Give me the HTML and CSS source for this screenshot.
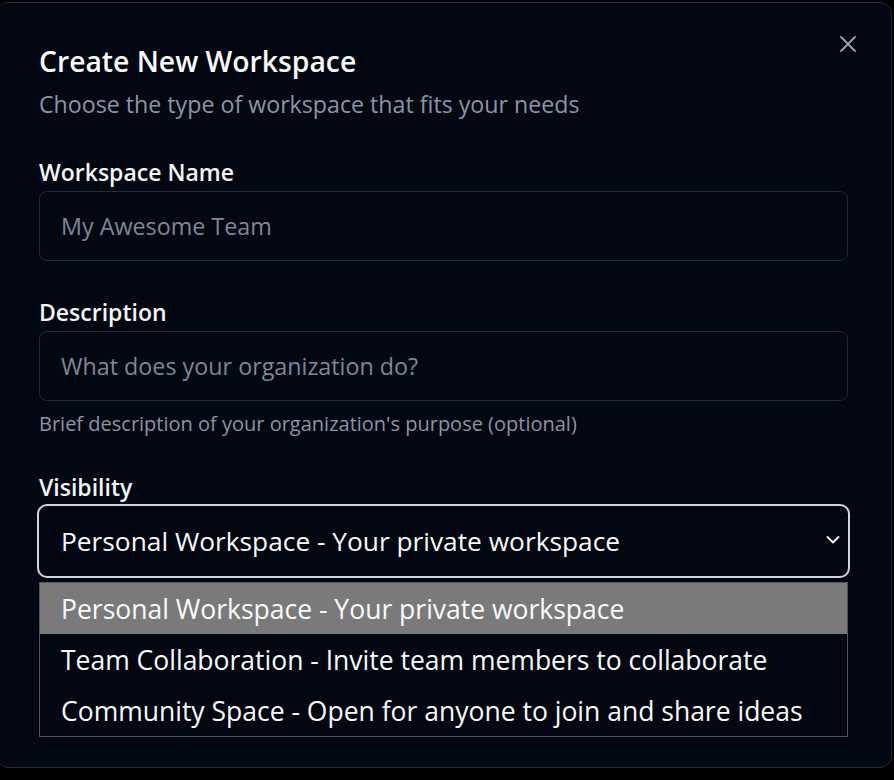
FILE: index.html
```html
<!DOCTYPE html>
<html lang="en">
<head>
<meta charset="utf-8">
<title>Create New Workspace</title>
<link rel="stylesheet" href="styles.css">
</head>
<body>
<div class="dialog">
  <button class="close" aria-label="Close">
    <svg width="16" height="16" viewBox="0 0 16 16"><path d="M1 1 L15 15 M15 1 L1 15" stroke="#9ca3af" stroke-width="1.8" stroke-linecap="round"/></svg>
  </button>
  <header class="head">
    <h2 class="title">Create New Workspace</h2>
    <p class="subtitle">Choose the type of workspace that fits your needs</p>
  </header>
  <div class="field">
    <label class="label">Workspace Name</label>
    <div class="input"><span class="placeholder">My Awesome Team</span></div>
  </div>
  <div class="field with-help">
    <label class="label">Description</label>
    <div class="input"><span class="placeholder">What does your organization do?</span></div>
    <p class="help">Brief description of your organization's purpose (optional)</p>
  </div>
  <div class="field vis">
    <label class="label">Visibility</label>
    <div class="select-wrap">
      <div class="select">
        <span class="value">Personal Workspace - Your private workspace</span>
        <svg class="chev" width="14" height="10" viewBox="0 0 14 10"><path d="M1.5 2 L7 7.5 L12.5 2" fill="none" stroke="#f3f4f6" stroke-width="1.8" stroke-linecap="round" stroke-linejoin="round"/></svg>
      </div>
      <ul class="options">
        <li class="opt active">Personal Workspace - Your private workspace</li>
        <li class="opt">Team Collaboration - Invite team members to collaborate</li>
        <li class="opt">Community Space - Open for anyone to join and share ideas</li>
      </ul>
    </div>
  </div>
</div>
</body>
</html>
```
FILE: styles.css
```css
* { box-sizing: border-box; }
html, body { margin: 0; padding: 0; }
body {
  background: #000;
  font-family: "Open Sans", "Noto Sans", sans-serif;
  overflow: hidden;
  width: 894px;
  height: 780px;
}
.dialog {
  position: relative;
  width: 896px;
  height: 766px;
  margin: 2px 0 0 -4px;
  background: #030712;
  border: 1px solid #1f2937;
  border-radius: 12px;
  padding: 40px 43px 0 42px;
}
.close {
  position: absolute;
  top: 33px;
  right: 35px;
  background: none;
  border: 0;
  padding: 0;
  width: 16px;
  height: 16px;
  display: flex;
}
.head { margin-bottom: 37px; }
.title {
  margin: 0;
  color: #f9fafb;
  font-size: 28.3px;
  line-height: 36px;
  font-weight: 600;
}
.subtitle {
  margin: 9px 0 0;
  color: #8b95a5;
  font-size: 23.2px;
  line-height: 32px;
}
.field { display: flex; flex-direction: column; margin-bottom: 36px; }
.field.with-help { margin-bottom: 34px; }
.label {
  color: #f3f4f6;
  font-size: 23px;
  line-height: 30px;
  font-weight: 600;
  margin-bottom: 4px;
}
.vis .label { margin-bottom: 2px; }
.input {
  height: 70px;
  border: 1px solid #1f2937;
  border-radius: 8px;
  display: flex;
  align-items: center;
  padding: 0 21px;
}
.placeholder {
  color: #7d8797;
  font-size: 23.3px;
}
.help {
  margin: 9px 0 0;
  color: #8b95a5;
  font-size: 20px;
  line-height: 28px;
}
.select-wrap { position: relative; margin: 0 -2px; }
.select {
  height: 74px;
  border: 2px solid #d1d5db;
  border-radius: 10px;
  display: flex;
  align-items: center;
  justify-content: space-between;
  padding: 0 8px 0 22px;
}
.value {
  color: #f9fafb;
  font-size: 26.3px;
}
.chev { margin-top: -3px; }
.options {
  position: absolute;
  left: 2px;
  right: 2px;
  top: 78px;
  margin: 0;
  padding: 0;
  list-style: none;
  background: #030712;
  border: 1px solid #4b5563;
}
.opt {
  height: 51px;
  display: flex;
  align-items: center;
  padding: 0 21px;
  color: #f9fafb;
  font-size: 26.5px;
  white-space: nowrap;
}
.opt.active { background: #7a7a7a; }
```
